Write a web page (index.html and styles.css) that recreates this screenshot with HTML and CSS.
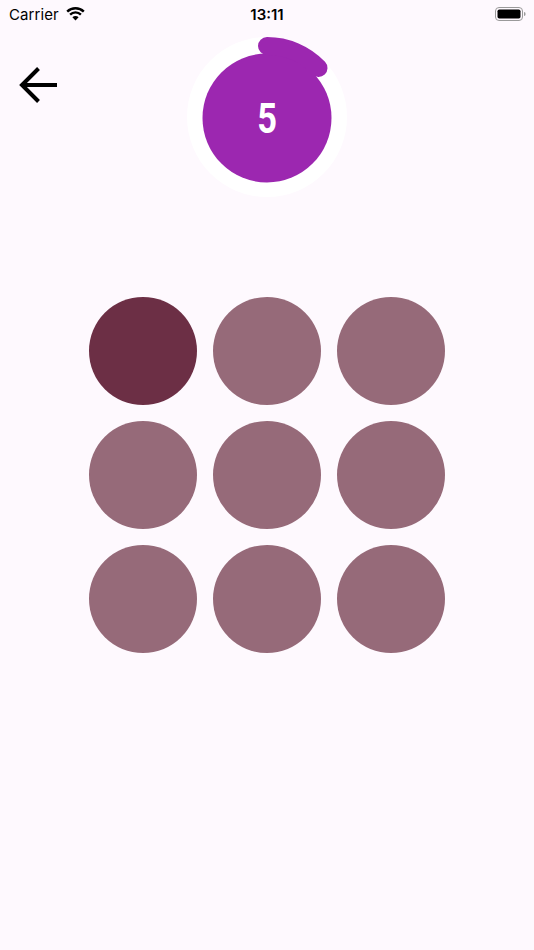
FILE: index.html
```html
<!DOCTYPE html>
<html>
<head>
<meta charset="utf-8">
<link rel="stylesheet" href="styles.css">
</head>
<body>
<div class="status">
  <div class="status-left">
    <span class="carrier">Carrier</span>
    <svg class="wifi" width="21" height="15" viewBox="0 0 21 15">
      <path d="M10.5 14.5 L7.4 11.2 A4.4 4.4 0 0 1 13.6 11.2 Z" fill="#000"/>
      <path d="M5.1 8.6 A7.7 7.7 0 0 1 15.9 8.6" fill="none" stroke="#000" stroke-width="2.4"/>
      <path d="M2.2 5.6 A11.8 11.8 0 0 1 18.8 5.6" fill="none" stroke="#000" stroke-width="2.4"/>
    </svg>
  </div>
  <div class="time">13:11</div>
  <div class="status-right">
    <svg class="battery" width="31" height="14" viewBox="0 0 31 14">
      <rect x="0.5" y="0.5" width="27" height="13" rx="3.5" fill="none" stroke="#9a9a9a" stroke-width="1"/>
      <rect x="2.5" y="2.5" width="23" height="9" rx="1.8" fill="#000"/>
      <path d="M29 5 Q30.6 5.2 30.6 7 Q30.6 8.8 29 9 Z" fill="#9a9a9a"/>
    </svg>
  </div>
</div>

<div class="header">
  <div class="back">
    <svg width="40" height="40" viewBox="0 0 40 40">
      <path d="M3 20 H38 M19.5 3.5 L3 20 L19.5 36.5" fill="none" stroke="#000" stroke-width="4" stroke-linecap="butt" stroke-linejoin="miter"/>
    </svg>
  </div>
  <div class="timer">
    <svg width="170" height="170" viewBox="0 0 170 170">
      <circle cx="85" cy="85" r="80" fill="#ffffff"/>
      <circle cx="85" cy="86" r="64.5" fill="#9c27b0"/>
      <path d="M85 14 A71 71 0 0 1 136.5 36" fill="none" stroke="#9c27b0" stroke-width="18" stroke-linecap="round"/>
    </svg>
    <div class="count">5</div>
  </div>
  <div></div>
</div>

<div class="grid">
  <div class="dot dark"></div>
  <div class="dot"></div>
  <div class="dot"></div>
  <div class="dot"></div>
  <div class="dot"></div>
  <div class="dot"></div>
  <div class="dot"></div>
  <div class="dot"></div>
  <div class="dot"></div>
</div>
</body>
</html>
```

FILE: styles.css
```css
html, body {
  margin: 0;
  padding: 0;
  background: #fef9fe;
  font-family: "Inter", "Liberation Sans", sans-serif;
}
body {
  width: 534px;
  height: 950px;
  overflow: hidden;
}
.status {
  height: 28px;
  display: grid;
  grid-template-columns: 1fr auto 1fr;
  align-items: center;
  padding: 0 8px 0 9px;
}
.status-left {
  display: flex;
  align-items: center;
  gap: 6px;
}
.carrier {
  font-size: 15px;
  color: #000;
  letter-spacing: 0.1px;
}
.wifi {
  display: block;
  margin-top: -1px;
}
.time {
  font-size: 15px;
  font-weight: 600;
  color: #000;
  margin-left: -1px;
}
.status-right {
  display: flex;
  justify-content: flex-end;
}
.battery {
  display: block;
}
.header {
  display: grid;
  grid-template-columns: 1fr 170px 1fr;
  margin-top: 4px;
}
.back {
  padding-left: 19px;
  padding-top: 33px;
}
.back svg {
  display: block;
}
.timer {
  position: relative;
  width: 170px;
  height: 170px;
}
.timer svg {
  display: block;
}
.count {
  position: absolute;
  left: 0;
  right: 0;
  top: 63px;
  text-align: center;
  color: #ffffff;
  font-family: "Roboto", "Liberation Sans", sans-serif;
  font-size: 43px;
  font-weight: 700;
  line-height: 46px;
  transform: scaleX(0.8);
}
.grid {
  margin: 95px auto 0;
  width: 356px;
  display: grid;
  grid-template-columns: repeat(3, 108px);
  gap: 16px;
}
.dot {
  width: 108px;
  height: 108px;
  border-radius: 50%;
  background: #966a79;
}
.dot.dark {
  background: #6c2f45;
}
```
